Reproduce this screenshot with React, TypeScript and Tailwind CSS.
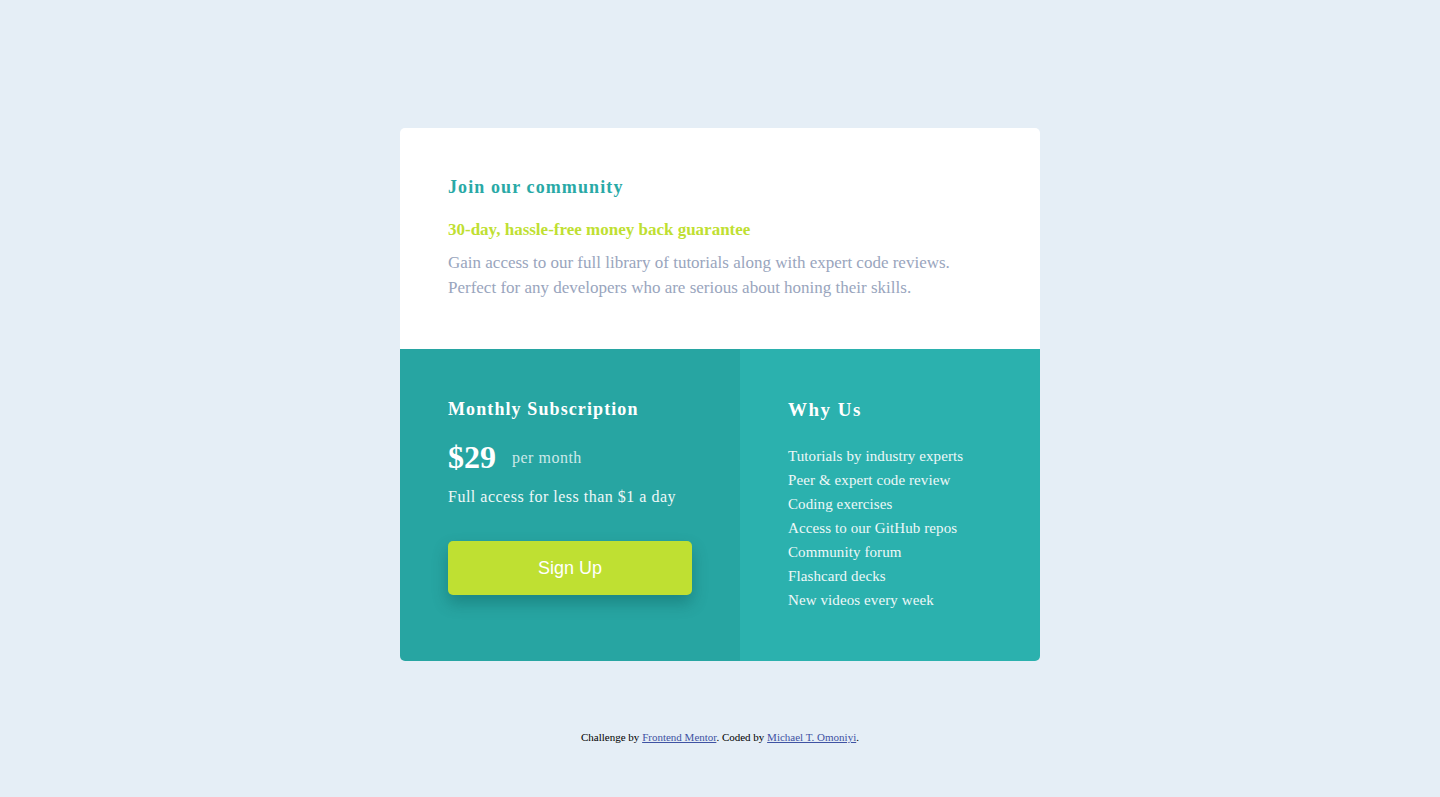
import React from 'react';

const features = [
  'Tutorials by industry experts',
  'Peer & expert code review',
  'Coding exercises',
  'Access to our GitHub repos',
  'Community forum',
  'Flashcard decks',
  'New videos every week',
];

const App: React.FC = () => {
  return (
    <div className="min-h-screen bg-[#e5eef6] pt-[128px] pb-[44px] flex flex-col items-center font-['Liberation_Serif',serif]">
      <div className="w-[640px] rounded-[5px] overflow-hidden">
        <section className="bg-white px-12 pt-12 pb-[49px]">
          <h1 className="text-[18px] leading-[23px] font-bold tracking-[1.1px] text-[#29a9a6]">Join our community</h1>
          <h2 className="mt-[21px] text-[17px] leading-[20px] font-bold text-[#bfdf32]">30-day, hassle-free money back guarantee</h2>
          <p className="mt-[10px] text-[17px] leading-[25px] text-[#99a5bd]">
            Gain access to our full library of tutorials along with expert code reviews.
            <br />
            Perfect for any developers who are serious about honing their skills.
          </p>
        </section>

        <div className="flex text-white">
          <section className="w-[340px] bg-[#27a5a2] px-12 pt-[50px] pb-[66px]">
            <h3 className="text-[18px] leading-[21px] font-bold tracking-[1.1px]">Monthly Subscription</h3>
            <div className="mt-[19px] flex items-center">
              <span className="text-[32px] leading-[37px] font-bold">$29</span>
              <span className="ml-4 text-[16px] tracking-[0.5px] text-[#cde9e9]">per month</span>
            </div>
            <p className="mt-[11px] text-[16px] leading-[19px] tracking-[0.5px] text-[#eef8f8]">Full access for less than $1 a day</p>
            <button className="mt-[35px] w-[244px] h-[54px] rounded-[5px] bg-[#bfe032] text-white text-[18px] font-['Liberation_Sans',sans-serif] shadow-[0_8px_16px_rgba(0,60,60,0.3)]">
              Sign Up
            </button>
          </section>
          <section className="flex-1 bg-[#2bb1ae] px-12 pt-[50px] pb-[49px]">
            <h3 className="text-[19px] leading-[21px] font-bold tracking-[1.5px]">Why Us</h3>
            <ul className="mt-[24px] text-[15px] leading-[24px] tracking-[0.1px] text-[#eef8f8]">
              {features.map(f => (
                <li key={f}>{f}</li>
              ))}
            </ul>
          </section>
        </div>
      </div>

      <p className="mt-[68px] text-[11px] text-black">
        Challenge by <a href="#" className="text-[#3e52a3] underline">Frontend Mentor</a>. Coded by{' '}
        <a href="#" className="text-[#3e52a3] underline">Michael T. Omoniyi</a>.
      </p>
    </div>
  );
};

export default App;
